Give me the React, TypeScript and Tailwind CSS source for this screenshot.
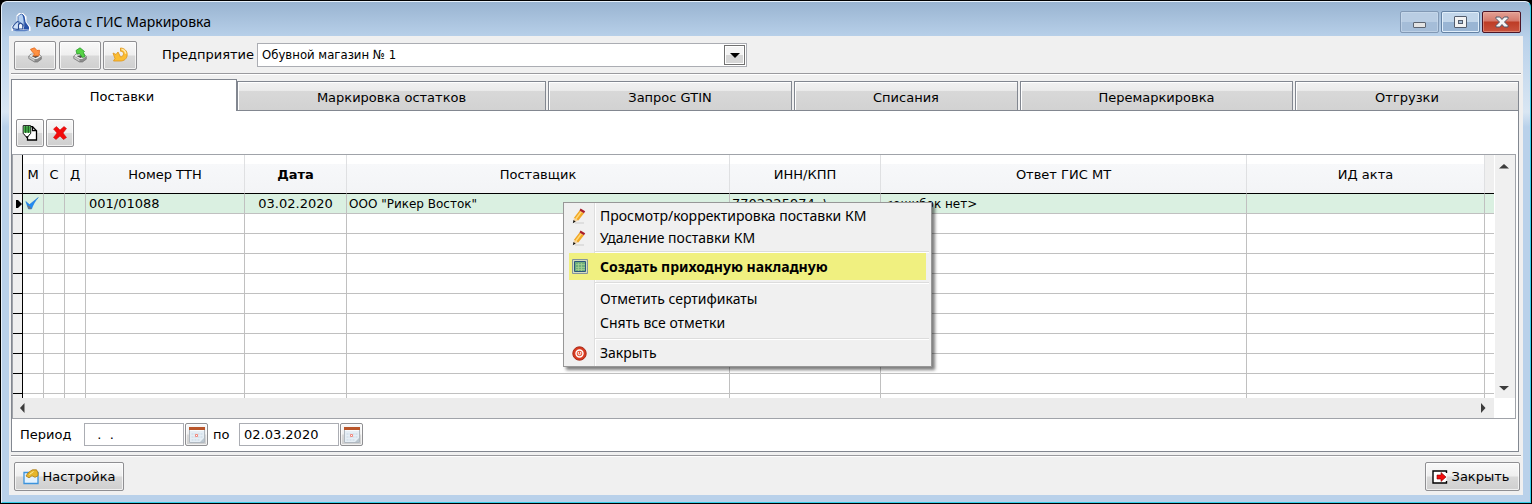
import React from "react";

const btn =
  "flex shrink-0 items-center justify-center rounded-[2px] border border-[#8f8f92] bg-[linear-gradient(#f9f9f9_0%,#efefef_48%,#d9d9d9_52%,#cfcfcf_100%)] shadow-[inset_0_0_0_1px_#ffffffb0]";

function LogoIcon() {
  return (
    <svg width="20" height="20" viewBox="0 0 20 20" className="shrink-0" aria-hidden="true">
      <path d="M5.500 3.500 8 1h4l3.500 3.500V10l4 5v4H.5v-5l5-4.500z" fill="#fff" />
      <path d="M7 4.500 9 2.500l2-.5 2 2v10H7z" fill="#b4d0f2" stroke="#4a6fae" strokeWidth=".9" />
      <path d="M11 2c2.500 1.500 3 4 3.500 8l3.500 5v2.500h-5.500C14 13 13.500 8 11 2z" fill="#2752a8" />
      <path d="M6.500 9.500C4 11.500 1.500 14 1.800 16c1 1.500 4 1.500 6.200 1.300V10z" fill="#cfe1f7" stroke="#31569c" strokeWidth="1.100" />
      <path d="M7.500 17v-4.500L9.500 11l2.300 1.500V17z" fill="#f2f8ff" stroke="#23468f" strokeWidth="1.100" />
      <path d="M2 17.800c4 1 11 1 16 0" fill="none" stroke="#5c82c4" strokeWidth="1.200" />
    </svg>
  );
}

function DiskIcon({ up = false }: { up?: boolean }) {
  return (
    <svg width="14" height="16" viewBox="0 0 14 16" aria-hidden="true">
      <path d="M.8 9 3 7h8l2.300 2.500v2.700L9.500 15h-3L.8 11.500z" fill="#8c8c8c" stroke="#666" strokeWidth=".6" />
      <path d="M1.200 9 3.300 7.300h7.400L13 9.500 9 12H6.500z" fill="#ececec" />
      <path d="M1.200 9.400 6.500 12.400v2.200L1.200 11.300z" fill="#c8c8c8" />
      <path d="m3.500 9 4 2 3.300-1.700L9 8z" fill="#4c4c4c" />
      {up ? (
        <path d="M3 3.500 7 .8l4.500 3.700-1 1 1.500 4-2.500 1-3-4L4 7z" fill="#55d344" stroke="#2a9b2b" strokeWidth=".8" />
      ) : (
        <path d="M2.500 2.300 6.500.8 9 3.500l2.500-.3-.5 5.600L5 9l1.500-2L4.500 5z" fill="#ff9142" stroke="#df641b" strokeWidth=".8" />
      )}
    </svg>
  );
}

function RefreshIcon() {
  return (
    <svg width="16" height="16" viewBox="0 0 16 16" aria-hidden="true">
      <path d="M8.500 1c4 .2 6.700 3 6.700 6.500 0 4-3 6.700-7.200 6.500H1.500L3 11.500 1 6l3 1.500 2-2.500 2.500 5c2-.3 3-1.500 3-3.200 0-1.600-1-2.600-3-2.600z" fill="#fbbd32" stroke="#e09a23" strokeWidth=".9" />
      <path d="M9.500 2.300c2.500.5 4 2.200 4.200 4.500" fill="none" stroke="#ffe9ac" strokeWidth="1.500" />
    </svg>
  );
}

function EditPageIcon() {
  return (
    <svg width="16" height="16" viewBox="0 0 16 16" aria-hidden="true">
      <path d="M5.500 1.700h5l4 4v9.300h-9z" fill="#fff" stroke="#000" strokeWidth="1.300" />
      <path d="M10.500 1.700v4h4" fill="none" stroke="#000" strokeWidth="1.300" />
      <path d="M1.200.7h7.500v7.600L5 12.800 1.200 8.300z" fill="#fff" stroke="#000" />
      <path d="M1.700 1.200h6.600v6.500H1.700z" fill="#45b04a" />
      <path d="M3.700 1v7m2.600-7v7" stroke="#17501a" />
      <path d="m3.800 11.200 1.200 2 1.200-2z" fill="#000" />
    </svg>
  );
}

function DeleteIcon() {
  return (
    <svg width="16" height="16" viewBox="0 0 16 16" aria-hidden="true">
      <path d="m1.500 4 3-2.500L8 5l4-3.500 2.500 2L11 8l3.500 4.500-3 2L8 11l-4 3.500-2.500-2L5 8z" fill="#f30c0c" stroke="#c90000" strokeWidth=".5" />
    </svg>
  );
}

function CheckIcon() {
  return (
    <svg width="14" height="13" viewBox="0 0 14 13" aria-hidden="true">
      <path d="M.8 4.500 4.500 7.500 13.300.5C10 4 8 8 6.500 12H3.500z" fill="#1f8bf5" stroke="#1c72cf" strokeWidth=".5" />
      <path d="m2 8 3 1.500L6.500 12H3.500z" fill="#6d7480" />
    </svg>
  );
}

function PencilIcon() {
  return (
    <svg width="14" height="16" viewBox="0 0 14 16" aria-hidden="true">
      <path d="M3 15h9" stroke="#ccc" />
      <path d="m1.800 10 5.700-7.500 4.500 2.700-5.700 7.300z" fill="#f2a725" />
      <path d="m3.800 11 5.700-7.500" stroke="#ffd977" strokeWidth="1.500" />
      <path d="m7.500 2.500 1-2 4.700 2.700L12 5.200z" fill="#a91d2a" />
      <path d="m1.800 10 4.500 2.500-5 2.300z" fill="#f2d3a4" />
      <path d="m1.500 12 2.200 1.600L.8 15.200z" fill="#111" />
    </svg>
  );
}

function SheetIcon() {
  return (
    <svg width="16" height="15" viewBox="0 0 16 15" aria-hidden="true">
      <path d="M.5.500h15v14H.5z" fill="#d5dcc0" stroke="#84949c" />
      <path d="M2.500 2.500h11v10h-11z" fill="#6fae7c" stroke="#29577b" />
      <path d="M4 5.500h9M4 8.500h9M4 10.500h9M6.500 4v8m3-8v8" stroke="#a6cf92" strokeWidth=".8" />
    </svg>
  );
}

function PowerIcon() {
  return (
    <svg width="15" height="15" viewBox="0 0 15 15" aria-hidden="true">
      <circle cx="7.500" cy="7.500" r="6.700" fill="#d83a20" stroke="#a92a18" />
      <circle cx="7.500" cy="7.500" r="3.500" fill="#e85a3c" stroke="#fff" strokeWidth="1.400" />
      <path d="M6.300 6v1.500a1.200 1.200 0 0 0 2.400 0V6" fill="none" stroke="#fff" />
    </svg>
  );
}

function CalendarIcon() {
  return (
    <svg width="16" height="16" viewBox="0 0 16 16" aria-hidden="true">
      <path d="M.5.500h15v15H.5z" fill="#e6eef5" stroke="#b0b8c0" />
      <path d="M0 0h16v3H0z" fill="#b9562b" />
      <path d="M1 3h14v1H1z" fill="#f8fbfd" />
      <path d="M2.500 7h11m-11 3h11m-11 3h8" stroke="#c5d6e4" strokeDasharray="2 1" />
      <path d="M6.500 7.500h2v2h-2z" fill="#fff" stroke="#f0867d" />
      <path d="m11 15 4-4v4z" fill="#bac6cf" />
    </svg>
  );
}

function SettingsIcon() {
  return (
    <svg width="16" height="16" viewBox="0 0 16 16" aria-hidden="true">
      <path d="M1 3.500h14v11H1z" fill="#e3f2ff" stroke="#3c93dc" strokeWidth="1.300" />
      <path d="m3 7 2-3 2.500-2L9.500.8h4l1.500 3v3l-3 1.500-3-1.500-3 2z" fill="#e6b62c" stroke="#a87912" strokeWidth=".8" />
      <path d="m6.500 5.500 4-3" stroke="#fff0a2" />
    </svg>
  );
}

function ExitIcon() {
  return (
    <svg width="16" height="14" viewBox="0 0 16 14" aria-hidden="true">
      <path d="M14.500 3V1H1v12h13.500v-2" fill="#fff" stroke="#000" strokeWidth="1.400" />
      <path d="M5 5h4V2.500L14 7l-5 4.500V9H5z" fill="#f20c0c" stroke="#7c0000" strokeWidth=".6" />
    </svg>
  );
}

function Arrow({ d }: { d: string }) {
  return (
    <svg width="10" height="10" viewBox="0 0 10 10" aria-hidden="true">
      <path d={d} fill="#3c3c3c" />
    </svg>
  );
}

const tabs = ["Поставки", "Маркировка остатков", "Запрос GTIN", "Списания", "Перемаркировка", "Отгрузки"];
const headers = ["М", "С", "Д", "Номер ТТН", "Дата", "Поставщик", "ИНН/КПП", "Ответ ГИС МТ", "ИД акта"];

function Grid() {
  return (
    <table className="w-full table-fixed border-separate border-spacing-0 text-[13px] leading-4">
      <colgroup>
        <col className="w-[10px]" />
        <col className="w-[21px]" />
        <col className="w-[21px]" />
        <col className="w-[21px]" />
        <col className="w-[159px]" />
        <col className="w-[102px]" />
        <col />
        <col className="w-[151px]" />
        <col className="w-[366px]" />
        <col className="w-[238px]" />
        <col className="w-[9px]" />
      </colgroup>
      <thead>
        <tr className="h-[39px]">
          <th className="border-r border-b border-black bg-[#efefef] p-0" />
          {headers.map((h) => (
            <th
              key={h}
              className={`overflow-hidden border-r border-b border-r-[#dfe0e2] border-b-black bg-[linear-gradient(#ffffff_0,#ffffff_9px,#f7f8fa_9px,#f3f4f6_100%)] px-0 pt-[2px] pb-0 whitespace-nowrap ${h === "Дата" ? "font-bold" : "font-normal"}`}
            >
              {h}
            </th>
          ))}
          <th className="border-b border-black bg-[#efefef] p-0" />
        </tr>
      </thead>
      <tbody>
        <tr className="h-5 bg-[#daf0e1] whitespace-nowrap">
          <td className="border-r border-b border-black bg-[#efefef] p-0">
            <svg width="6" height="8" viewBox="0 0 6 8" className="ml-[3px]" aria-hidden="true">
              <path d="M0 0h2l4 4-4 4H0z" />
            </svg>
          </td>
          <td className="border-r border-b border-[#c0c0c0] p-0">
            <span className="flex justify-center pr-[2px]"><CheckIcon /></span>
          </td>
          <td className="border-r border-b border-[#c0c0c0] p-0" />
          <td className="border-r border-b border-[#c0c0c0] p-0" />
          <td className="border-r border-b border-[#c0c0c0] px-[3px] py-0">001/01088</td>
          <td className="border-r border-b border-[#c0c0c0] p-0 text-center">03.02.2020</td>
          <td className="border-r border-b border-[#c0c0c0] px-[2px] py-0 text-[12px]">ООО "Рикер Восток"</td>
          <td className="border-r border-b border-[#c0c0c0] px-[2px] py-0">7702225974 -\</td>
          <td className="border-r border-b border-[#c0c0c0] px-[2px] py-0 text-[12px]">&lt;ошибок нет&gt;</td>
          <td className="border-r border-b border-[#c0c0c0] p-0" />
          <td className="border-b border-[#c0c0c0] p-0" />
        </tr>
        {Array.from({ length: 9 }, (_, r) => (
          <tr key={r} className="h-5">
            <td className="border-r border-b border-black bg-[#efefef] p-0" />
            {headers.map((h) => (
              <td key={h} className="border-r border-b border-[#c0c0c0] p-0" />
            ))}
            <td className="border-b border-[#c0c0c0] p-0" />
          </tr>
        ))}
        <tr className="h-1">
          <td className="border-r border-black bg-[#efefef] p-0" />
          {headers.map((h) => (
            <td key={h} className="border-r border-[#c0c0c0] p-0" />
          ))}
          <td className="p-0" />
        </tr>
      </tbody>
    </table>
  );
}

function MenuItem({ icon, children, className = "h-[22px]" }: { icon?: React.ReactNode; children: React.ReactNode; className?: string }) {
  return (
    <button role="menuitem" className={`mx-[3px] flex items-center text-left whitespace-nowrap ${className}`}>
      <span className="flex w-[31px] shrink-0 items-center pl-[3px]">{icon}</span>
      {children}
    </button>
  );
}

function MenuRule() {
  return <div className="ml-[29px] h-[2px] shrink-0 border-t border-[#dcdcdc] bg-white" />;
}

function ContextMenu() {
  return (
    <div
      role="menu"
      className="absolute top-[202px] left-[563px] flex w-[369px] flex-col border border-[#979797] bg-[#f0f0f0] bg-[linear-gradient(90deg,transparent_30px,#dedede_30px,#dedede_31px,#ffffff_31px,#ffffff_32px,transparent_32px)] p-[2px] font-['Noto_Sans','Open_Sans',sans-serif] text-[14px] leading-5 shadow-[3px_3px_3px_#00000080]"
    >
      <MenuItem icon={<PencilIcon />}>Просмотр/корректировка поставки КМ</MenuItem>
      <MenuItem icon={<PencilIcon />} className="mb-[2px] h-[22px]">Удаление поставки КМ</MenuItem>
      <MenuRule />
      <MenuItem icon={<SheetIcon />} className="mb-[2px] h-[27px] bg-[#f0f080] font-bold">Создать приходную накладную</MenuItem>
      <MenuRule />
      <MenuItem className="mt-[3px] h-6">Отметить сертификаты</MenuItem>
      <MenuItem className="mb-[3px] h-6">Снять все отметки</MenuItem>
      <MenuRule />
      <MenuItem icon={<PowerIcon />} className="mt-[2px] h-[22px]">Закрыть</MenuItem>
    </div>
  );
}

export default function App() {
  return (
    <div className="relative flex min-h-screen flex-col bg-black font-['DejaVu_Sans',sans-serif] text-[13px] leading-4 text-black">
      <div className="m-px flex flex-1 flex-col rounded-t-[6px] border-t border-r border-b border-l border-t-[#e6f0fa] border-r-[#35cde8] border-b-[#35cde8] border-l-[#e6f0fa] bg-[#b9d1ea] bg-[linear-gradient(#99b4d1_0,#b9d1ea_36px,#d9e6f3_110px,#b9d1ea_125px)] px-[7px] pb-[7px]">
        <header className="flex h-[34px] shrink-0 items-center">
          <div className="flex flex-1 items-center gap-1 pt-[6px] pl-[2px]">
            <LogoIcon />
            <h1 className="font-['Noto_Sans','Open_Sans',sans-serif] text-[14px] leading-5">Работа с ГИС Маркировка</h1>
          </div>
          <div className="flex gap-[2px] pt-[6px] pr-[2px]">
            <button aria-label="Свернуть" className="flex h-[22px] w-[39px] items-end justify-center rounded-[2px] border border-[#8299b5] bg-[linear-gradient(#b9cde3_50%,#a5bdd8_50%)] pb-1 shadow-[inset_0_0_0_1px_#d0dfef90]">
              <span className="h-[6px] w-[13px] rounded-[1px] border border-[#5c6470] bg-[#e3e3e3]" />
            </button>
            <button aria-label="Развернуть" className="flex h-[22px] w-[39px] items-center justify-center rounded-[2px] border border-[#6482a4] bg-[linear-gradient(#c2d6ea_50%,#99b5d4_50%)] shadow-[inset_0_0_0_1px_#e0eefa]">
              <span className="flex h-3 w-[13px] items-center justify-center rounded-[1px] border border-[#535c6c] bg-[#f3f3f3]">
                <span className="h-1 w-[5px] border border-[#535c6c] bg-[#a6bdd6]" />
              </span>
            </button>
            <button aria-label="Закрыть окно" className="flex h-[22px] w-[39px] items-center justify-center rounded-[2px] border border-[#4c1526] bg-[linear-gradient(#e4a195_0%,#d5796b_45%,#bd3c25_50%,#c9533e_100%)] shadow-[inset_0_0_0_1px_#f0b8a880]">
              <svg width="14" height="12" viewBox="0 0 14 12" aria-hidden="true">
                <path d="M1 1h3.800L7 3.500 9.200 1H13v1.500L9.500 6 13 9.500V11H9.200L7 8.500 4.800 11H1V9.500L4.500 6 1 2.500z" fill="#f5f5f5" stroke="#51586b" strokeWidth="1" />
              </svg>
            </button>
          </div>
        </header>

        <main className="flex flex-1 flex-col bg-[#f0f0f0] px-[2px]">
          <div className="flex h-[38px] shrink-0 items-center border-b border-[#9a9a9e] pt-px pl-[3px] shadow-[0_1px_0_#ffffff]">
            <button aria-label="Загрузить" className={`${btn} mr-[3px] h-[29px] w-[42px]`}><DiskIcon /></button>
            <button aria-label="Выгрузить" className={`${btn} mr-[2px] h-[29px] w-[42px]`}><DiskIcon up /></button>
            <button aria-label="Обновить" className={`${btn} h-[29px] w-[34px]`}><RefreshIcon /></button>
            <label htmlFor="company" className="ml-[25px] w-[95px]">Предприятие</label>
            <div className="relative h-6 w-[490px]">
              <select id="company" className="h-full w-full appearance-none border border-[#abadb3] bg-white pl-1 font-['DejaVu_Sans_Condensed','DejaVu_Sans',sans-serif] text-[13px]">
                <option>Обувной магазин № 1</option>
              </select>
              <span className="pointer-events-none absolute top-[2px] right-[2px] flex h-5 w-[21px] items-center justify-center border border-[#707070] bg-[linear-gradient(#f4f4f4_50%,#d6d6d6_50%)] shadow-[inset_0_0_0_1px_#ffffff]">
                <svg width="10" height="5" viewBox="0 0 10 5" aria-hidden="true"><path d="M0 0h10L5 5z" /></svg>
              </span>
            </div>
          </div>

          <section className="mt-[5px] mr-[2px] flex flex-1 flex-col">
            <div role="tablist" className="grid h-8 grid-cols-[226fr_311fr_246fr_226fr_275fr_224fr] items-end">
              {tabs.map((t, i) =>
                i === 0 ? (
                  <button key={t} role="tab" aria-selected="true" className="h-8 border-t border-r border-l border-[#828790] bg-white pt-[2px] pr-1">
                    {t}
                  </button>
                ) : (
                  <span key={t} className={`flex h-[30px] border-b border-[#828790] ${i < 5 ? "pr-[2px]" : ""}`}>
                    <button role="tab" aria-selected="false" className="flex-1 border-t border-r border-l border-[#828790] bg-[linear-gradient(#f2f2f2_0%,#ebebeb_30%,#d8d8d8_34%,#d2d2d2_100%)] pt-1 shadow-[inset_1px_1px_0_#ffffff]">
                      {t}
                    </button>
                  </span>
                ),
              )}
            </div>
            <div role="tabpanel" className="flex flex-1 flex-col border-r border-b border-l border-[#828790] bg-white pr-[2px]">
              <div className="flex gap-[2px] pt-2 pb-[7px] pl-1">
                <button aria-label="Редактировать" className={`${btn} h-7 w-7`}><EditPageIcon /></button>
                <button aria-label="Удалить" className={`${btn} h-7 w-7`}><DeleteIcon /></button>
              </div>
              <div className="border border-[#a0a3a9]">
                <div className="flex">
                  <div className="min-w-0 flex-1"><Grid /></div>
                  <div className="flex w-[21px] flex-col items-center justify-between border-l border-white bg-[#f0f0f0] pt-[6px] pr-[3px] pb-[5px]">
                    <Arrow d="M0 7.500 5 3l5 4.500z" />
                    <Arrow d="M0 3h10L5 7.500z" />
                  </div>
                </div>
                <div className="flex">
                  <div className="flex h-5 flex-1 items-center justify-between bg-[#ececec] pr-[6px] pl-1">
                    <Arrow d="M7.500 0v10L3 5z" />
                    <Arrow d="M3 0v10l4.500-5z" />
                  </div>
                  <div className="w-[21px] bg-white" />
                </div>
              </div>
              <div className="flex items-center pt-1 pb-1 pl-2">
                <label htmlFor="from" className="w-16">Период</label>
                <input id="from" defaultValue="  .  ." className="h-[23px] w-[100px] border border-[#abadb3] bg-white px-1 whitespace-pre" />
                <button aria-label="Выбрать начало периода" className={`${btn} ml-[1px] h-[23px] w-[23px]`}><CalendarIcon /></button>
                <label htmlFor="to" className="ml-[5px] w-[26px]">по</label>
                <input id="to" defaultValue="02.03.2020" className="h-[23px] w-[100px] border border-[#abadb3] bg-white px-1" />
                <button aria-label="Выбрать конец периода" className={`${btn} ml-[1px] h-[23px] w-[23px]`}><CalendarIcon /></button>
              </div>
            </div>
          </section>

          <footer className="mt-[3px] flex h-10 shrink-0 items-center justify-between border-t border-[#9a9a9e] pt-[2px] pr-[1px] pl-[3px] shadow-[inset_0_1px_0_#ffffff]">
            <button className={`${btn} h-[29px] w-[110px] gap-1`}><SettingsIcon />Настройка</button>
            <button className={`${btn} h-[29px] w-[95px] gap-1 pr-1`}><ExitIcon />Закрыть</button>
          </footer>
        </main>
      </div>
      <ContextMenu />
    </div>
  );
}
